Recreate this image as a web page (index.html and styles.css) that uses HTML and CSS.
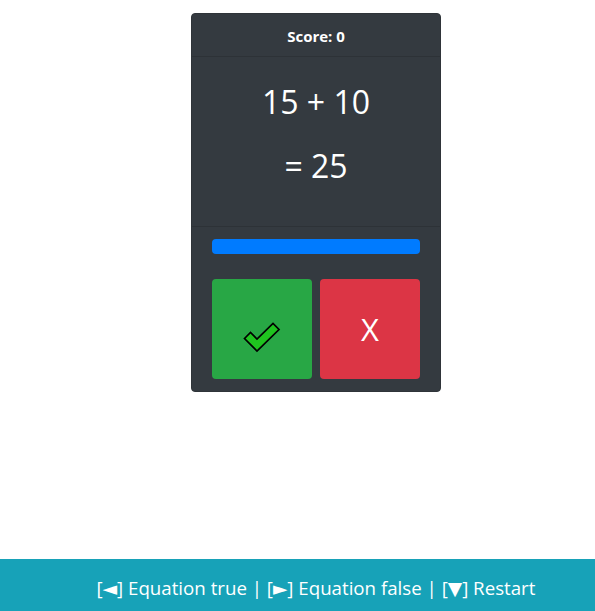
FILE: index.html
```html
<!DOCTYPE html>
<html>
<head>
<meta charset="utf-8">
<link rel="stylesheet" href="styles.css">
</head>
<body>
<div class="page">
  <div class="card">
    <div class="card-header">Score: 0</div>
    <div class="card-body">
      <div class="eq-line">15 + 10</div>
      <div class="eq-line">= 25</div>
    </div>
    <div class="card-footer">
      <div class="progress"><div class="progress-bar" style="width:100%"></div></div>
      <div class="buttons">
        <button class="btn btn-true" aria-label="Equation true">
          <svg width="38" height="31" viewBox="0 0 38 31" aria-hidden="true">
            <polygon points="1.5,16.5 7.5,10.5 14,17 30,1.5 36,7.5 14,29" fill="#1fc41f" stroke="#000" stroke-width="1.7" stroke-linejoin="miter"/>
          </svg>
        </button>
        <button class="btn btn-false">X</button>
      </div>
    </div>
  </div>
</div>
<footer class="keys">[◄] Equation true | [►] Equation false | [▼] Restart</footer>
</body>
</html>
```
FILE: styles.css
```css
html, body {
  margin: 0;
  padding: 0;
  background: #fff;
  font-family: "Open Sans", "Noto Sans", "DejaVu Sans", sans-serif;
  height: 100%;
}
body {
  position: relative;
  min-height: 611px;
}
.page {
  padding: 13px 0 0 37px;
  display: flex;
  justify-content: center;
}
.card {
  width: 250px;
  box-sizing: border-box;
  background: #343a40;
  border: 1px solid #2f3439;
  border-radius: 4px;
  color: #fff;
  overflow: hidden;
}
.card-header {
  height: 42px;
  box-sizing: content-box;
  line-height: 44px;
  text-align: center;
  font-weight: bold;
  font-size: 15px;
  border-bottom: 1px solid #2d3237;
}
.card-body {
  height: 169px;
  box-sizing: border-box;
  padding-top: 13px;
  text-align: center;
}
.eq-line {
  font-size: 32px;
  line-height: 64px;
}
.card-footer {
  border-top: 1px solid #2d3237;
  padding: 12px 20px 12px 20px;
}
.progress {
  height: 15px;
  border-radius: 4px;
  background: #e9ecef;
  overflow: hidden;
}
.progress-bar {
  height: 100%;
  background: #007bff;
}
.buttons {
  margin-top: 25px;
  display: flex;
  gap: 8px;
}
.btn {
  width: 100px;
  height: 100px;
  border: none;
  border-radius: 4px;
  padding: 0;
  display: flex;
  align-items: center;
  justify-content: center;
  font-family: "Open Sans", "Noto Sans", sans-serif;
  color: #fff;
  cursor: pointer;
}
.btn-true {
  background: #28a745;
}
.btn-true svg {
  display: block;
  margin-top: 17px;
}
.btn-false {
  background: #dc3545;
  font-size: 31px;
}
.keys {
  position: absolute;
  left: 0;
  right: 0;
  bottom: 0;
  height: 52px;
  box-sizing: border-box;
  padding: 14px 0 0 37px;
  background: #17a2b8;
  color: #fff;
  text-align: center;
  font-size: 18.7px;
  line-height: 30px;
  white-space: nowrap;
}
```
